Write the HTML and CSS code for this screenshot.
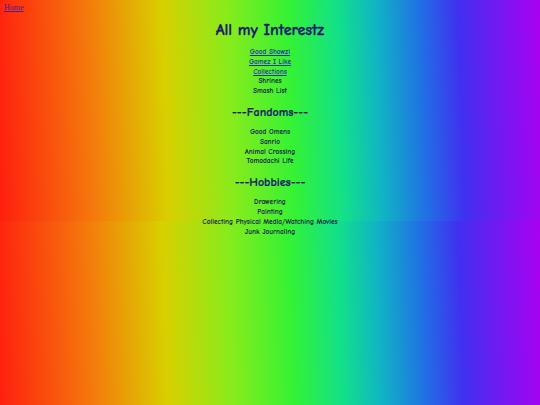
FILE: index.html
```html
<!DOCTYPE html>
<html lang="en">
<head>
<meta charset="utf-8">
<title>All my Interestz</title>
<link rel="stylesheet" href="styles.css">
</head>
<body>
<a class="home" href="#">Home</a>
<main class="page">
  <h1 class="title">All my Interestz</h1>
  <ul class="list">
    <li><a href="#">Good Showz!</a></li>
    <li><a href="#">Gamez I Like</a></li>
    <li><a href="#">Collections</a></li>
    <li>Shrines</li>
    <li>Smash List</li>
  </ul>
  <h2 class="section">---Fandoms---</h2>
  <ul class="list">
    <li>Good Omens</li>
    <li>Sanrio</li>
    <li>Animal Crossing</li>
    <li>Tomodachi Life</li>
  </ul>
  <h2 class="section">---Hobbies---</h2>
  <ul class="list">
    <li>Drawering</li>
    <li>Painting</li>
    <li>Collecting Physical Media/Watching Movies</li>
    <li>Junk Journaling</li>
  </ul>
</main>
</body>
</html>
```
FILE: styles.css
```css
html {
  background-image: linear-gradient(88deg, #ff1e0e 0%, #f5780c 17%, #d8d000 31%, #86ec1c 43%, #34f234 54%, #12e08a 63%, #10b4c4 70%, #2070e4 78%, #4030f0 85%, #aa00f2 100%);
  background-size: 100% 221px;
  background-repeat: repeat;
  min-height: 100%;
}

body {
  margin: 0;
  padding: 3px 4px 0;
  font-family: "Comic Neue", "Comic Sans MS", cursive;
  font-weight: 700;
  color: #15204a;
}

.home {
  display: block;
  width: max-content;
  font-family: "Liberation Serif", serif;
  font-weight: 400;
  font-size: 8px;
  line-height: 9px;
  color: #551a8b;
}

.page {
  display: flex;
  flex-direction: column;
  align-items: center;
  text-align: center;
}

.title {
  margin: 8px 0 0;
  font-size: 16px;
  line-height: 20px;
  font-weight: 700;
  color: #191970;
  -webkit-text-stroke: 0.3px #191970;
}

.section {
  margin: 9px 0 0;
  font-size: 12px;
  line-height: 14px;
  font-weight: 700;
  color: #191970;
  -webkit-text-stroke: 0.2px #191970;
}

.list {
  list-style: none;
  margin: 7px 0 0;
  padding: 0;
  font-size: 7.3px;
  line-height: 9.8px;
}

.section + .list {
  margin-top: 8px;
}

.list a {
  color: #1f3a9e;
}
```
